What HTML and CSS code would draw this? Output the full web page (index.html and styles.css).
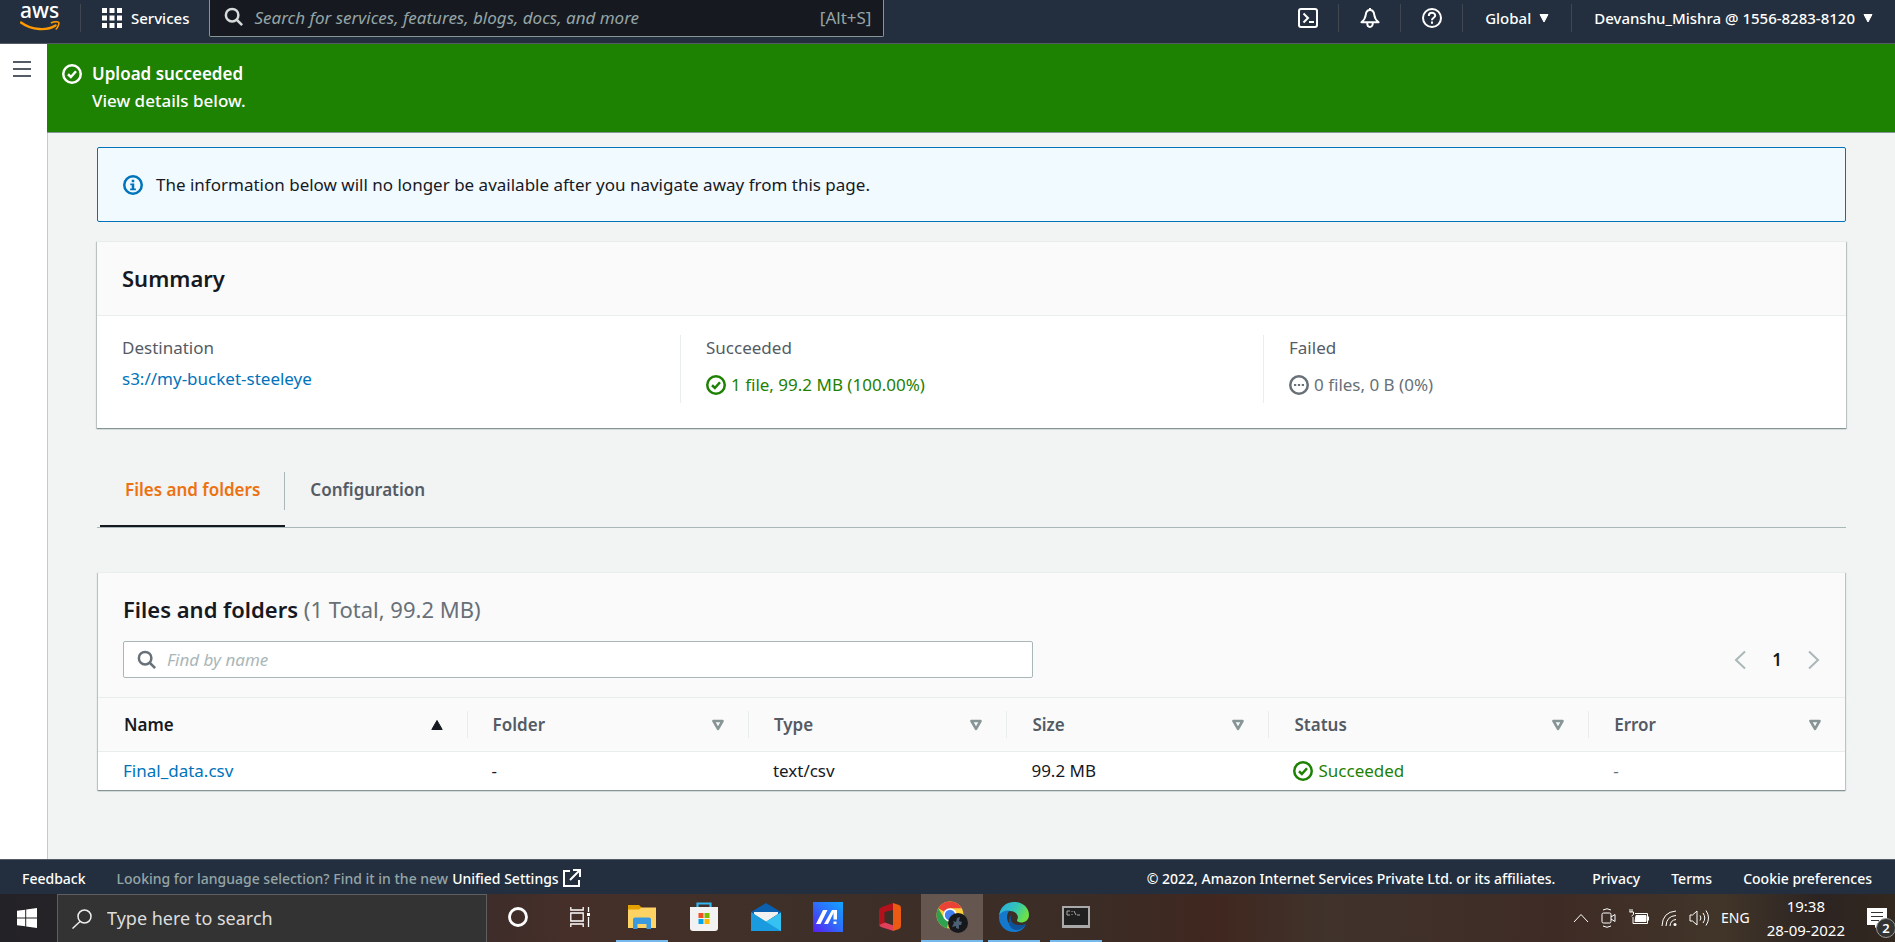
FILE: index.html
```html
<!DOCTYPE html>
<html lang="en">
<head>
<meta charset="utf-8">
<meta name="viewport" content="width=device-width, initial-scale=1">
<title>Upload: status</title>
<link rel="stylesheet" href="styles.css">
</head>
<body>
<svg class="sprite" aria-hidden="true">
  <symbol id="i-check" viewBox="0 0 16 16"><g fill="none" stroke="currentColor" stroke-width="2"><circle cx="8" cy="8" r="7"/><path d="M4.8 8.2l2.3 2.2 4.1-4.6"/></g></symbol>
  <symbol id="i-info" viewBox="0 0 16 16"><circle cx="8" cy="8" r="7" fill="none" stroke="currentColor" stroke-width="2"/><path fill="currentColor" d="M7 3.8h2v1.9H7zM5.8 6.7H9v4.1h1.3v1.4H5.7v-1.4H7V8.1H5.8z"/></symbol>
  <symbol id="i-pending" viewBox="0 0 16 16"><circle cx="8" cy="8" r="7" fill="none" stroke="currentColor" stroke-width="2"/><path fill="currentColor" d="M4 7.2h1.8v1.6H4zM7.1 7.2h1.8v1.6H7.1zM10.2 7.2H12v1.6h-1.8z"/></symbol>
  <symbol id="i-search" viewBox="0 0 16 16"><g fill="none" stroke="currentColor" stroke-width="2"><circle cx="6.500" cy="6.500" r="5"/><path d="M10 10l4.500 4.500"/></g></symbol>
  <symbol id="i-caret" viewBox="0 0 10 10"><path fill="currentColor" stroke="currentColor" stroke-linejoin="round" d="M1 1.500h8L5 9z"/></symbol>
  <symbol id="i-asc" viewBox="0 0 12 12"><path fill="currentColor" stroke="currentColor" stroke-linejoin="round" d="M6 1.500L11.200 10.500H.8z"/></symbol>
  <symbol id="i-sort" viewBox="0 0 12 12"><path fill="none" stroke="currentColor" stroke-width="2.600" stroke-linejoin="round" d="M1.500 2h9L6 9.800z"/></symbol>
</svg>

<header class="nav">
  <a class="logo" href="#" aria-label="AWS home">
    <span class="logo-word">aws</span>
    <svg width="40" height="11" viewBox="0 0 40 11"><path d="M1 1.500c11 8 26 8.500 34.500 3" fill="none" stroke="#f90" stroke-width="2.400" stroke-linecap="round"/><path d="M31.500 1.700c3-1.300 7-1.100 7.300-.2s-.4 4.500-2.600 6.500" fill="none" stroke="#f90" stroke-width="1.600" stroke-linecap="round"/></svg>
  </a>
  <button class="nav-item services" type="button">
    <svg width="20" height="20" viewBox="0 0 20 20" fill="currentColor"><path d="M0 0h5v5H0zM7.500 0h5v5h-5zM15 0h5v5h-5zM0 7.500h5v5H0zM7.500 7.500h5v5h-5zM15 7.500h5v5h-5zM0 15h5v5H0zM7.500 15h5v5h-5zM15 15h5v5h-5z"/></svg>
    <span>Services</span>
  </button>
  <label class="nav-search">
    <svg width="20" height="20"><use href="#i-search"/></svg>
    <input type="search" aria-label="Search AWS" placeholder="Search for services, features, blogs, docs, and more">
    <span class="hint">[Alt+S]</span>
  </label>
  <nav class="nav-right">
    <button class="nav-item icon-only first" type="button" aria-label="CloudShell">
      <svg width="20" height="20" viewBox="0 0 20 20" fill="none" stroke="currentColor" stroke-width="2"><rect x="1" y="1" width="18" height="18" rx="2"/><path d="M5.500 5.500l4.500 4.500-4.500 4.500M11 14h5"/></svg>
    </button>
    <button class="nav-item icon-only" type="button" aria-label="Notifications">
      <svg width="20" height="20" viewBox="0 0 20 20" fill="none" stroke="currentColor" stroke-width="2" stroke-linejoin="round"><path d="M10 0v2M10 2c-3.200 0-4 2.300-4.300 5-.4 3.500-1.700 5.300-4.300 7.200h17.200c-2.600-1.900-3.900-3.700-4.300-7.200C14 4.300 13.200 2 10 2zM7.200 15c0 5.200 5.600 5.200 5.600 0"/></svg>
    </button>
    <button class="nav-item icon-only" type="button" aria-label="Help">
      <svg width="20" height="20" viewBox="0 0 20 20" fill="none" stroke="currentColor" stroke-width="2"><circle cx="10" cy="10" r="9"/><path d="M6.800 8c0-4.300 6.400-4 6.400-.4 0 2.200-3.200 2.200-3.200 4.600M10 13.500v2.300"/></svg>
    </button>
    <button class="nav-item" type="button"><span>Global</span><svg width="10" height="10"><use href="#i-caret"/></svg></button>
    <button class="nav-item" type="button"><span>Devanshu_Mishra @ 1556-8283-8120</span><svg width="10" height="10"><use href="#i-caret"/></svg></button>
  </nav>
</header>

<div class="app">
  <aside class="rail">
    <button type="button" aria-label="Open navigation">
      <svg width="18" height="16" viewBox="0 0 18 16" fill="currentColor"><path d="M0 0h18v2H0zM0 7h18v2H0zM0 14h18v2H0z"/></svg>
    </button>
  </aside>
  <div class="page">
    <section class="flash" role="status">
      <svg width="20" height="20"><use href="#i-check"/></svg>
      <div>
        <strong>Upload succeeded</strong>
        <p>View details below.</p>
      </div>
    </section>

    <main class="content">
      <div class="alert">
        <svg width="20" height="20"><use href="#i-info"/></svg>
        <p>The information below will no longer be available after you navigate away from this page.</p>
      </div>

      <section class="card summary">
        <h2>Summary</h2>
        <dl>
          <div><dt>Destination</dt><dd><a href="#">s3://my-bucket-steeleye</a></dd></div>
          <div><dt>Succeeded</dt><dd class="status ok"><svg width="20" height="20"><use href="#i-check"/></svg>1 file, 99.2 MB (100.00%)</dd></div>
          <div><dt>Failed</dt><dd class="status idle"><svg width="20" height="20"><use href="#i-pending"/></svg>0 files, 0 B (0%)</dd></div>
        </dl>
      </section>

      <div class="tabs" role="tablist">
        <button class="tab active" type="button" role="tab" aria-selected="true">Files and folders</button>
        <button class="tab" type="button" role="tab" aria-selected="false">Configuration</button>
      </div>

      <section class="card files">
        <h2>Files and folders <span>(1 Total, 99.2 MB)</span></h2>
        <div class="tools">
          <label class="find">
            <svg width="20" height="20"><use href="#i-search"/></svg>
            <input type="text" aria-label="Find by name" placeholder="Find by name">
          </label>
          <div class="pager">
            <button type="button" aria-label="Previous page"><svg width="12" height="20" viewBox="0 0 12 20" fill="none" stroke="currentColor" stroke-width="2"><path d="M11 1.500L2 10l9 8.500"/></svg></button>
            <button class="current" type="button">1</button>
            <button type="button" aria-label="Next page"><svg width="12" height="20" viewBox="0 0 12 20" fill="none" stroke="currentColor" stroke-width="2"><path d="M1 1.500L10 10l-9 8.500"/></svg></button>
          </div>
        </div>
        <table>
          <colgroup><col class="c-name"><col class="c-folder"><col class="c-type"><col class="c-size"><col class="c-status"><col class="c-error"></colgroup>
          <thead>
            <tr>
              <th class="sorted"><div>Name<svg width="12" height="12"><use href="#i-asc"/></svg></div></th>
              <th><div>Folder<svg width="12" height="12"><use href="#i-sort"/></svg></div></th>
              <th><div>Type<svg width="12" height="12"><use href="#i-sort"/></svg></div></th>
              <th><div>Size<svg width="12" height="12"><use href="#i-sort"/></svg></div></th>
              <th><div>Status<svg width="12" height="12"><use href="#i-sort"/></svg></div></th>
              <th><div>Error<svg width="12" height="12"><use href="#i-sort"/></svg></div></th>
            </tr>
          </thead>
          <tbody>
            <tr>
              <td><a href="#">Final_data.csv</a></td>
              <td>-</td>
              <td>text/csv</td>
              <td>99.2 MB</td>
              <td><span class="status ok"><svg width="20" height="20"><use href="#i-check"/></svg>Succeeded</span></td>
              <td class="muted">-</td>
            </tr>
          </tbody>
        </table>
      </section>
    </main>
  </div>
</div>

<footer class="footer">
  <a href="#">Feedback</a>
  <p>Looking for language selection? Find it in the new <a href="#">Unified Settings<svg width="18" height="18" viewBox="0 0 18 18" fill="none" stroke="currentColor" stroke-width="2"><path d="M7 2H1v15h15v-6M10 1h7v7M17 1L7 11"/></svg></a></p>
  <span class="copyright">© 2022, Amazon Internet Services Private Ltd. or its affiliates.</span>
  <a href="#">Privacy</a>
  <a href="#">Terms</a>
  <a href="#">Cookie preferences</a>
</footer>

<div class="taskbar">
  <button class="start" type="button" aria-label="Start">
    <svg width="20" height="20" viewBox="0 0 20 20" fill="#fff"><path d="M0 2.800l8.200-1.100v7.800H0zM9.200 1.500L20 0v9.500H9.200zM0 10.500h8.200v7.800L0 17.200zM9.200 10.500H20V20L9.200 18.500z"/></svg>
  </button>
  <label class="os-search">
    <svg width="20" height="20" viewBox="0 0 20 20" fill="none" stroke="#eee" stroke-width="1.500"><circle cx="12.500" cy="7.500" r="6.500"/><path d="M8 12.500L.5 19.500"/></svg>
    <input type="text" aria-label="Type here to search" placeholder="Type here to search">
  </label>
  <div class="apps">
    <button type="button" aria-label="Cortana"><svg width="20" height="20" viewBox="0 0 20 20"><circle cx="10" cy="10" r="8.500" fill="none" stroke="#fff" stroke-width="2.800"/></svg></button>
    <button type="button" aria-label="Task view"><svg width="20" height="20" viewBox="0 0 20 20" fill="none" stroke="#fff" stroke-width="1.300"><path d="M.8 0v3h12.400V0M.8 20v-3h12.400v3M.8 6h12.400v8H.8zM18.500 0v5M18.500 10v10"/><path d="M17 6h3v3h-3z" fill="#fff" stroke="none"/></svg></button>
    <button class="open" type="button" aria-label="File Explorer"><svg width="28" height="24" viewBox="0 0 28 24"><path d="M0 0h11l3 3-3 4H0z" fill="#e5a100"/><path d="M0 4.500h11l2.500-2H28V23H0z" fill="#ffd264"/><path d="M5 24V14.500q0-2 2-2h14q2 0 2 2V24h-4.500v-5h-9v5z" fill="#3b99e0"/></svg></button>
    <button type="button" aria-label="Store"><svg width="30" height="30" viewBox="0 0 30 30"><path d="M8.500 6V1.500h13V6" fill="none" stroke="#32b8ee" stroke-width="2.200"/><path d="M1 5h28v21q0 3-3 3H4q-3 0-3-3z" fill="#f2f2f2"/><path d="M9.500 11h5v5h-5z" fill="#f25022"/><path d="M15.500 11h5v5h-5z" fill="#7fba00"/><path d="M9.500 17h5v5h-5z" fill="#00a4ef"/><path d="M15.500 17h5v5h-5z" fill="#ffb900"/></svg></button>
    <button type="button" aria-label="Mail"><svg width="30" height="28" viewBox="0 0 30 28"><path d="M15 0l15 9v4H0V9z" fill="#0a5fae"/><path d="M3 9h24v2L15 19 3 11z" fill="#f1f1f1"/><path d="M0 9.500l15 9 15-9V28H0z" fill="#35c1f1"/><path d="M0 9.500L30 28H0z" fill="#1a9be0"/></svg></button>
    <button type="button" aria-label="MyASUS"><svg width="30" height="30" viewBox="0 0 30 30"><defs><linearGradient id="as" x1="0" y1="1" x2="1" y2="0"><stop stop-color="#5a1cf0"/><stop offset=".5" stop-color="#2f6bfa"/><stop offset="1" stop-color="#12a5ff"/></linearGradient></defs><path d="M0 0h30v30H0z" fill="url(#as)"/><path d="M10 8h4.500L7.500 22H3zM19 8h3L15 22h-4z" fill="#fff"/><path d="M20.500 8H24v9.500h-3.500zM20.500 19.500h3v2.500h-3z" fill="#fff"/></svg></button>
    <button type="button" aria-label="Office"><svg width="22" height="28" viewBox="0 0 22 28"><path d="M14 0L3 4Q0 5 0 8v14l5.500-2V9l8.500-2z" fill="#b3121d"/><path d="M0 22l6-2.500 8.500 3V28L2 24z" fill="#e0405a"/><path d="M14 0l6 2q2 .7 2 3v18q0 2-2 3l-6 2z" fill="#eb5a12"/></svg></button>
    <button class="open current" type="button" aria-label="Chrome"><svg width="32" height="32" viewBox="0 0 32 32"><circle cx="14" cy="14" r="13.500" fill="#ffcd40"/><path d="M14 14L2.300 7.300A13.500 13.500 0 0 1 25.700 7.300H14z" fill="#ea4335"/><path d="M14 14l-3 13.200A13.500 13.500 0 0 1 2.300 7.300l5.900 10z" fill="#2fa24f"/><circle cx="14" cy="14" r="6.800" fill="#fff"/><circle cx="14" cy="14" r="5.200" fill="#3f7ff0"/><circle cx="22" cy="22" r="10" fill="#17181c"/><path d="M17 20l3 1 1-4 3-1-1 4 3 1-1 3-2 0 0 4-3-1 0-2-4 1 2-4z" fill="#4d5f75"/></svg></button>
    <button class="open" type="button" aria-label="Edge"><svg width="30" height="30" viewBox="0 0 30 30"><defs><linearGradient id="eg" x1="0" y1="0" x2="1" y2=".4"><stop stop-color="#2aa9e6"/><stop offset=".6" stop-color="#33c7b4"/><stop offset="1" stop-color="#6be04a"/></linearGradient></defs><path d="M0 14C1 5 7 0 15 0c9 0 15 6 15 13 0 5-4 7.500-8 7.500-3 0-5-1.500-3.500-3.500C20 14 17 9 11 9 6 9 1 11 0 14z" fill="url(#eg)"/><path d="M0 14c1-3 5-6 10.500-5.500C5 15 9 26 20 26q4 0 7-3C24 28 20 30 15 30 6 30-.5 23 0 14z" fill="#1478cc"/><path d="M13 12c-3 5 0 11 7 11 3 0 5-.5 7.500-1.500C25 26 21 28 17 28 9 27 8 17 13 12z" fill="#0f5299"/></svg></button>
    <button class="open" type="button" aria-label="Command Prompt"><svg width="28" height="22" viewBox="0 0 28 22"><path d="M0 0h28v22H0z" fill="#a9a9a9"/><path d="M2 2h24v17H2z" fill="#202020"/><path d="M8 5H5v4h3M10 5v1M10 8v1M12 5l2 4M15 9h3" fill="none" stroke="#aaa"/></svg></button>
  </div>
  <div class="tray">
    <svg width="16" height="10" viewBox="0 0 16 10"><path d="M1 9l7-7.500L15 9"/></svg>
    <svg width="16" height="20" viewBox="0 0 16 20"><rect x="1" y="5" width="9" height="10" rx="1.500"/><path d="M10 9l4-2.500v7L10 11M2 2q4-2.500 8 0M2 18q4 2.500 8 0"/></svg>
    <svg width="20" height="18" viewBox="0 0 20 18"><path d="M6 4.500h12.500v10H4V8M19.500 7.500v4M3 0v3M1 0v3M.5 3h4v2.500L2.500 7"/><path d="M7 6.500h10v6H6z" fill="#fff"/></svg>
    <svg width="16" height="18" viewBox="0 0 16 18"><path d="M1 17Q1.500 3 15 2M5 17Q5.500 7 15 6.500M9 17q.5-6 6-6.500"/><circle cx="14" cy="15.500" r="1.500" fill="#fff" stroke="none"/></svg>
    <svg width="20" height="18" viewBox="0 0 20 18"><path d="M1 6h2.500L8 2v14l-4.500-4H1zM11 6.500q1.800 2.500 0 5M14 4q3.500 5 0 10M17 1.500q5 7.500 0 15"/></svg>
    <span class="lang">ENG</span>
    <time class="clock" datetime="2022-09-28T19:38"><span>19:38</span><span>28-09-2022</span></time>
    <button class="notices" type="button" aria-label="2 notifications">
      <svg width="20" height="20" viewBox="0 0 20 20"><path d="M0 0h20v17h-8l-4 3v-3H0z" fill="#fff" stroke="none"/><path d="M4 4.500h12M4 8.500h12M4 12.500h8" stroke="#333"/></svg>
      <span class="badge">2</span>
    </button>
  </div>
</div>
</body>
</html>
```
FILE: styles.css
```css
* { box-sizing: border-box; }

body {
  margin: 0;
  min-height: 100vh;
  display: flex;
  flex-direction: column;
  background: #f2f3f3;
  color: #16191f;
  font: 17px/25px "Noto Sans", "Open Sans", sans-serif;
}

p, h2, dl, dd { margin: 0; }
a { color: #0073bb; text-decoration: none; }
svg { flex: none; display: block; }
.sprite { position: absolute; width: 0; height: 0; }

button {
  padding: 0;
  border: 0;
  background: none;
  color: inherit;
  font: inherit;
  cursor: pointer;
}

input {
  flex: 1;
  min-width: 0;
  padding: 0;
  border: 0;
  outline: 0;
  background: none;
  color: inherit;
  font: inherit;
}

/* Top navigation */
.nav {
  display: flex;
  align-items: flex-start;
  height: 44px;
  background: #232f3e;
  border-bottom: 1px solid #545b64;
  color: #fff;
  font-size: 15px;
  font-weight: 500;
}

.logo {
  width: 80px;
  padding-left: 20px;
  color: #fff;
}

.logo-word {
  display: block;
  height: 21px;
  font-size: 21px;
  line-height: 21px;
}

.nav-item {
  display: flex;
  align-items: center;
  gap: 8px;
  height: 28px;
  margin-top: 4px;
  padding: 0 22px;
  border-left: 1px solid #414750;
  white-space: nowrap;
}

.services { gap: 9px; padding: 0 20px 0 21px; }
.icon-only { padding: 0 20px 0 21px; }
.first { border-left: 0; }

.nav-search {
  flex: 0 1 675px;
  display: flex;
  align-items: center;
  height: 37px;
  padding: 0 12px 2px 14px;
  border: 1px solid #879596;
  border-top: 0;
  border-radius: 0 0 2px 2px;
  background: #16191f;
  color: #d5dbdb;
  font-size: 17px;
  font-weight: 400;
}

.nav-search input { margin-left: 10px; }
.nav-search input::placeholder { color: #95a5a6; font-style: italic; opacity: 1; }
.hint { color: #95a5a6; }
.nav-right { display: flex; margin-left: auto; }

/* Shell */
.app { flex: 1; display: flex; }

.rail {
  flex: none;
  width: 47px;
  padding: 17px 13px;
  background: #fff;
  color: #545b64;
}

.rail button { display: block; }

.page {
  flex: 1;
  min-width: 0;
  border-left: 1px solid #c4c9cb;
}

.flash {
  display: flex;
  gap: 10px;
  height: 89px;
  margin-left: -1px;
  padding: 16px 15px;
  background: #1d8102;
  border-bottom: 1px solid #879596;
  color: #fff;
  font-weight: 500;
  line-height: 27px;
}

.flash svg { margin-top: 4px; }
.flash strong { font-weight: 600; }

.content { padding: 14px 49px 68px; }

.alert {
  display: flex;
  align-items: center;
  gap: 13px;
  padding: 24px 25px;
  border: 1px solid #0073bb;
  border-radius: 2px;
  background: #f1faff;
}

.alert svg { color: #0073bb; }

.card {
  background: #fff;
  border-top: 1px solid #eaeded;
  box-shadow: 0 1px 1px #879596, 1px 1px 1px #c4cccc, -1px 1px 1px #c4cccc;
}

.card h2 {
  font-size: 22px;
  font-weight: 600;
  line-height: 28px;
}

.summary { margin-top: 19px; }

.summary h2 {
  padding: 22px 25px 23px;
  background: #fafafa;
  border-bottom: 1px solid #eaeded;
}

.summary dl {
  display: grid;
  grid-template-columns: repeat(3, 1fr);
  padding: 19px 0 25px;
}

.summary dl > div {
  height: 68px;
  padding: 0 25px;
}

.summary dl > div + div { border-left: 1px solid #eaeded; }
.summary dt { color: #545b64; }
.summary dd { margin-top: 6px; }
.summary dd.status { margin-top: 12px; }

.status {
  display: flex;
  align-items: center;
  gap: 5px;
}

.ok { color: #1d8102; }
.idle { color: #687078; }
.muted { color: #687078; }

.tabs {
  display: flex;
  margin-top: 44px;
  padding-left: 3px;
  border-bottom: 1px solid #aab7b8;
}

.tab {
  height: 55px;
  padding: 0 25px 19px;
  color: #545b64;
  font-weight: 600;
  line-height: 36px;
}

.tab.active {
  border-bottom: 2px solid #16191f;
  padding-bottom: 17px;
  background: linear-gradient(#aab7b8, #aab7b8) right top / 1px 38px no-repeat;
  color: #ec7211;
}

.files { margin: 44px 1px 0; background: #fafafa; }
.files h2 { padding: 22px 25px 18px; }
.files h2 span { color: #687078; font-weight: 400; }

.tools {
  display: flex;
  align-items: center;
  justify-content: space-between;
  padding: 0 25px 19px;
}

.find {
  flex: 0 1 910px;
  display: flex;
  align-items: center;
  gap: 10px;
  height: 37px;
  padding: 0 13px;
  border: 1px solid #aab7b8;
  border-radius: 2px;
  background: #fff;
  color: #687078;
}

.find input::placeholder { color: #aab7b8; font-style: italic; opacity: 1; }

.pager {
  display: flex;
  align-items: center;
  gap: 26px;
  color: #aab7b8;
}

.pager .current { color: #16191f; font-weight: 600; }

table {
  width: 100%;
  table-layout: fixed;
  border-collapse: collapse;
}

.c-name { width: 21.1%; }
.c-folder { width: 16.1%; }
.c-type { width: 14.8%; }
.c-size { width: 15%; }
.c-status { width: 18.3%; }
.c-error { width: 14.7%; }

th {
  padding: 13px 0;
  border-top: 1px solid #eaeded;
  border-bottom: 1px solid #eaeded;
  color: #545b64;
  font-weight: 600;
  text-align: left;
}

th div {
  display: flex;
  align-items: center;
  justify-content: space-between;
  height: 27px;
  padding: 0 24px 0 26px;
}

th + th div { border-left: 1px solid #eaeded; padding-left: 25px; }
th svg { color: #879596; }
th.sorted, th.sorted svg { color: #16191f; }
td { padding: 6px 25px 7px; background: #fff; }

/* Console footer */
.footer {
  display: flex;
  align-items: center;
  gap: 31px;
  height: 35px;
  padding: 2px 23px 0 22px;
  background: #232f3e;
  border-top: 1px solid #545b64;
  color: #fff;
  font-size: 14px;
  font-weight: 500;
  white-space: nowrap;
}

.footer a { color: #fff; }
.footer p { color: #95a5a6; }
.footer p, .footer p a { display: flex; align-items: center; gap: 4px; }
.copyright { margin: 0 6px 0 auto; }

/* Desktop taskbar */
.taskbar {
  display: flex;
  height: 48px;
  background: linear-gradient(90deg, #232226 0, #32292a 20%, #462f29 30%, #3e3028 42%, #3b2c25 58%, #40271f 64%, #40332b 70%, #3e2b25 82%, #413529 91%, #2c2422 96%, #33281f 100%);
  color: #fff;
}

.start {
  width: 57px;
  padding-left: 17px;
}

.os-search {
  flex: 0 1 430px;
  display: flex;
  align-items: center;
  gap: 15px;
  padding: 0 14px;
  border: 1px solid #5f5f5f;
  border-bottom: 0;
  background: #333;
  font-size: 18px;
}

.os-search input::placeholder { color: #ddd; opacity: 1; }
.apps { display: flex; }

.apps button {
  display: flex;
  align-items: center;
  justify-content: center;
  width: 52px;
  margin: 0 5px;
  border-bottom: 2px solid transparent;
}

.apps .open { border-bottom-color: #76b9ed; }
.apps .current { width: 62px; margin: 0; background: #655750; }

.tray {
  display: flex;
  align-items: center;
  gap: 12px;
  margin-left: auto;
  padding-right: 8px;
  font-size: 15px;
  line-height: 24px;
}

.tray svg { fill: none; stroke: #fff; }
.lang { font-size: 14px; }

.clock {
  display: flex;
  flex-direction: column;
  margin-left: 5px;
  text-align: center;
}

.notices { position: relative; margin-left: 10px; }

.badge {
  position: absolute;
  left: 9px;
  top: 10px;
  width: 20px;
  height: 20px;
  border: 1px solid #999;
  border-radius: 50%;
  background: #333;
  font-size: 13px;
  font-weight: 600;
  line-height: 18px;
}
```
